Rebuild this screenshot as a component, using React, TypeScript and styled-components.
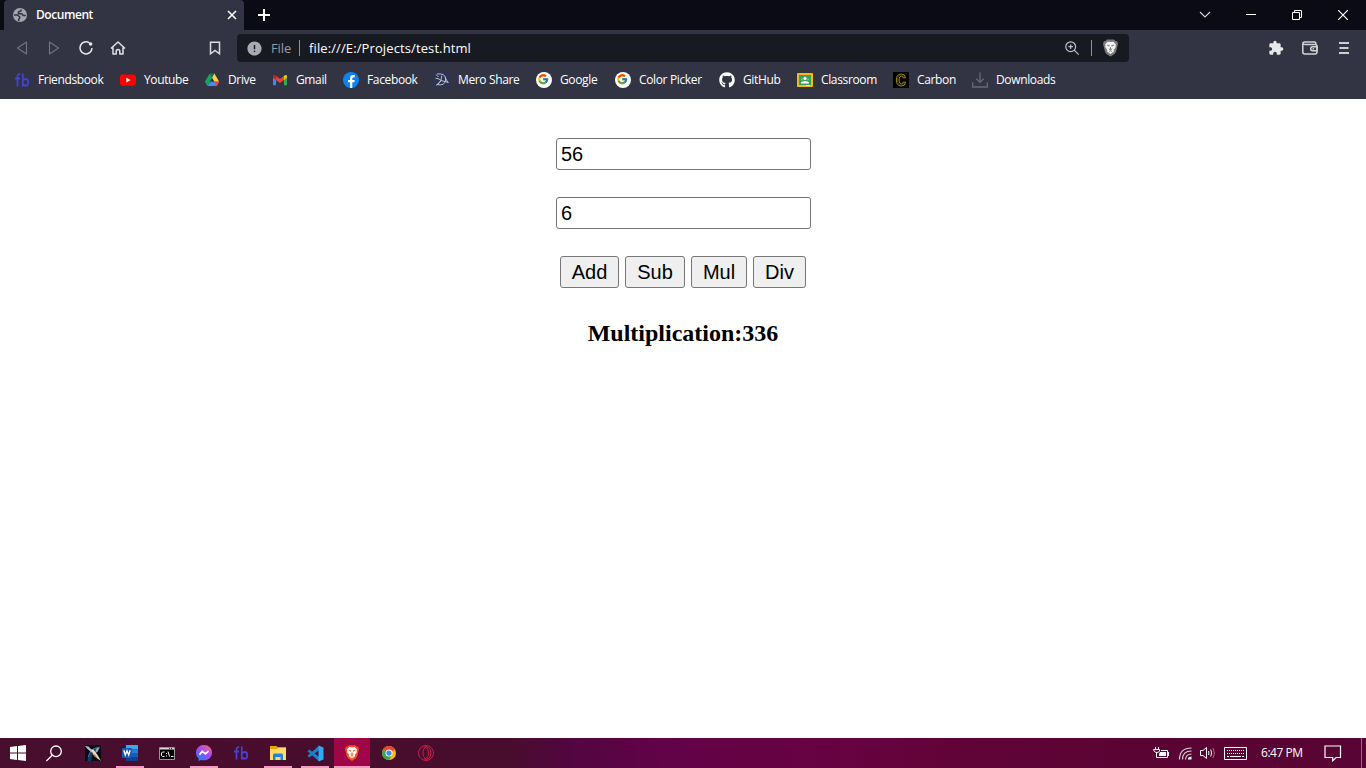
import React from "react";
import styled, { createGlobalStyle } from "styled-components";
import { FcGoogle } from "react-icons/fc";
import { FaGithub } from "react-icons/fa";
import { MdError, MdExtension } from "react-icons/md";

const GlobalStyle = createGlobalStyle`
  html, body { margin: 0; padding: 0; overflow: hidden; background: #fff; }
  * { box-sizing: border-box; }
  svg { display: block; flex: none; }
`;

const UI_FONT = `"Open Sans", "Noto Sans", sans-serif`;

const Screen = styled.div`
  width: 1366px;
  height: 768px;
  display: flex;
  flex-direction: column;
  background: #fff;
`;

const TabStrip = styled.header`
  display: flex;
  height: 30px;
  padding-left: 4px;
  background: #0a0b14;
`;

const Tab = styled.div`
  width: 240px;
  display: flex;
  align-items: center;
  padding: 0 6px 0 8px;
  background: #323443;
  border-radius: 4px 4px 0 0;
`;

const TabTitle = styled.span`
  flex: 1;
  margin-left: 8px;
  font: 600 12px/16px ${UI_FONT};
  letter-spacing: -0.44px;
  color: #fff;
`;

const NewTab = styled.div`
  display: flex;
  align-items: center;
  margin-left: 13px;
  flex: 1;
`;

const WindowButton = styled.div`
  display: flex;
  align-items: center;
  justify-content: center;
  width: 46px;
  height: 29px;
`;

const Toolbar = styled.div`
  display: flex;
  align-items: center;
  height: 36px;
  background: #323443;
`;

const NavGroup = styled.div`
  display: flex;
  align-items: center;
  width: 237px;
  padding-left: 14px;
  gap: 16px;
`;

const BookmarkButton = styled.div`
  margin-left: auto;
  margin-right: 14px;
`;

const AddressBar = styled.div`
  width: 892px;
  height: 28px;
  display: flex;
  align-items: center;
  padding: 0 11px 0 9px;
  border-radius: 4px;
  background: #171a21;
  font: 13px/18px ${UI_FONT};
`;

const Scheme = styled.span`
  margin-left: 8px;
  width: 28px;
  letter-spacing: -0.1px;
  color: #989ba3;
`;

const Divider = styled.span<{ $before?: number; $after: number }>`
  width: 1px;
  height: 16px;
  margin-left: ${(p) => p.$before ?? 0}px;
  margin-right: ${(p) => p.$after}px;
  background: #8f9197;
`;

const Url = styled.span`
  flex: 1;
  letter-spacing: 0.11px;
  color: #fff;
`;

const Actions = styled.div`
  display: flex;
  align-items: center;
  gap: 18px;
  margin-left: auto;
  padding-right: 14px;
`;

const BookmarksBar = styled.nav`
  display: flex;
  align-items: center;
  height: 33px;
  padding: 0 0 5px 14px;
  background: #323443;
`;

const Bookmark = styled.div<{ $w: number }>`
  width: ${(p) => p.$w}px;
  display: flex;
  align-items: center;
  gap: 8px;
  font: 12px/16px ${UI_FONT};
  letter-spacing: -0.36px;
  white-space: nowrap;
  color: #fff;
`;

const Page = styled.main`
  flex: 1;
  display: flex;
  flex-direction: column;
  align-items: center;
  padding-top: 39px;
`;

const NumberInput = styled.input`
  width: 255px;
  height: 32px;
  margin: 0 0 27px 1px;
  padding: 1px 4px;
  border: 1px solid #767676;
  border-radius: 3px;
  outline: none;
  background: #fff;
  color: #000;
  font: 20px "Liberation Sans", Arial, sans-serif;
`;

const Operations = styled.div`
  display: flex;
  gap: 6px;
`;

const Operation = styled.button<{ $w: number }>`
  width: ${(p) => p.$w}px;
  height: 32px;
  padding: 0;
  border: 1px solid #767676;
  border-radius: 3px;
  background: #efefef;
  color: #000;
  font: 20px "Liberation Sans", Arial, sans-serif;
`;

const Result = styled.h4`
  margin: 31px 0 0;
  font: bold 24px/28px "Liberation Serif", "Times New Roman", serif;
  color: #000;
`;

const Taskbar = styled.footer`
  display: flex;
  height: 30px;
  background: linear-gradient(
    90deg,
    #480e2d 0px,
    #480d2d 510px,
    #520640 570px,
    #620247 660px,
    #670242 820px,
    #610337 960px,
    #5a0433 1140px,
    #580434 1366px
  );
`;

const TaskItem = styled.div<{ $running?: boolean; $active?: boolean }>`
  display: flex;
  align-items: center;
  justify-content: center;
  width: ${(p) => (p.$active ? 36 : 28)}px;
  margin: ${(p) => (p.$active ? "0 5px 0 -4px" : "0 9px 0 0")};
  border-top: 2px solid transparent;
  border-bottom: 2px solid ${(p) => (p.$running || p.$active ? "#f69ac1" : "transparent")};
  background: ${(p) => (p.$active ? "#9e0647" : "transparent")};
`;

const StartGroup = styled.div`
  display: flex;
  align-items: center;
  width: 79px;
  padding-left: 10px;
  gap: 20px;
`;

const Tray = styled.div`
  display: flex;
  align-items: center;
  margin-left: auto;
`;

const TrayIcons = styled.div`
  display: flex;
  align-items: center;
  gap: 7px;
`;

const Clock = styled.span`
  width: 44px;
  margin: 0 19px 0 14px;
  font: 12px/16px ${UI_FONT};
  letter-spacing: -0.46px;
  white-space: nowrap;
  color: #fff;
`;

const ShowDesktop = styled.span`
  width: 5px;
  height: 30px;
  margin-left: 19px;
  border-left: 1px solid #a06283;
`;

const Lion = ({ w, h, shield, mane }: { w: number; h: number; shield: string; mane: string }) => (
  <svg width={w} height={h} viewBox="0 0 16 18">
    <path d="M4.3 0h7.4l1.5 1.5L15 1.9l1 2.4-.4 1.8-1.8 7.1-1.5 2.2L8 18l-4.3-2.6-1.5-2.2L.4 6.1 0 4.3l1-2.4 1.8-.4z" fill={shield} />
    <path d="M4.9 2.2 8 2.7l3.1-.5 2.7 3-.5 1.3.3 1.4-2.2 3.2.2 1.5L8 15.3l-3.6-2.7.2-1.5-2.2-3.2.3-1.4-.5-1.3z" fill={mane} />
    <path d="m4.2 5.9 2.5.5-.3 1M11.8 5.9l-2.5.5.3 1M8 8.2v2.6M6.2 9.8 8 11l1.8-1.2M6.6 12.6 8 12l1.4.6" fill="none" stroke={shield} strokeWidth="1" />
  </svg>
);

const FbLogo = () => (
  <svg width="16" height="16" viewBox="0 0 16 16" fill="none" stroke="#4442cf" strokeWidth="1.8">
    <path d="M6.3 2.2H5.5Q3.5 2.2 3.5 4.5V14.5M1 6.5h5M8.8 1.4v13.1M8.8 9q.9-2.2 2.9-2.2 2.5 0 2.5 3.5t-2.5 3.4q-2 0-2.9-2" />
  </svg>
);

const GlobeIcon = () => (
  <svg width="16" height="16" viewBox="0 0 16 16">
    <circle cx="8" cy="8" r="7" fill="#a4a6ad" />
    <path d="M9 2.5v1.3L6.5 5v1.8h3.2l1.5 1.7h2.6M2 8h3.3l2.4 1.8v1.5l-1 1v1.7" fill="none" stroke="#323443" strokeWidth="1.5" />
  </svg>
);

const YoutubeLogo = () => (
  <svg width="16" height="16" viewBox="0 0 16 16">
    <rect y="2.4" width="16" height="11.4" rx="2.8" fill="#f00" />
    <path d="m6.3 5.7 4.3 2.4-4.3 2.4z" fill="#fff" />
  </svg>
);

const DriveLogo = () => (
  <svg width="16" height="16" viewBox="0 0 16 16">
    <path d="M5.7 1.5.8 9.8l2.5 4.3L8.2 5.7z" fill="#14a45c" />
    <path d="M5.7 1.5h4.7L8.2 5.7z" fill="#0b8043" />
    <path d="m10.4 1.5 4.8 8.3h-4.7L8.1 5.7z" fill="#ffcf48" />
    <path d="M5.9 9.8h9.3l-2.4 4.3H3.5z" fill="#4688f4" />
    <path d="m10.5 9.8 2.3 4.3 2.4-4.3z" fill="#ea4335" />
  </svg>
);

const GmailLogo = () => (
  <svg width="16" height="16" viewBox="0 0 16 16">
    <path d="M1 4.2v9h3.1V7.1L1 4.8z" fill="#4285f4" />
    <path d="M15 4.2v9h-3.1V7.1L15 4.8z" fill="#34a853" />
    <path d="M4.1 4v4L8 11l3.9-3V4L8 7z" fill="#ea4335" />
    <path d="M1 4.8V4q.2-1.5 1.8-.9L4.1 4v4L1 5.8z" fill="#c5221f" />
    <path d="M15 4.8V4q-.2-1.5-1.8-.9l-1.3.9v4L15 5.8z" fill="#fbbc04" />
  </svg>
);

const MeroLogo = () => (
  <svg width="16" height="16" viewBox="0 0 16 16">
    <rect width="16" height="16" fill="#2d3354" />
    <path d="M2 2.5 4.5 5M2 13.5l5-4.7M3 2q7.5-1 8.7 4 .5 4.5-2.5 6.2-3 1.3-6.2.3M1.5 6.2 5 7l2 1.5L3.5 13M7 8.5l.8-5M7 8.5l7.5 2M11 5.5l3 5" fill="none" stroke="#c6c9d7" strokeWidth=".9" />
  </svg>
);

const GoogleLogo = () => (
  <svg width="16" height="16" viewBox="0 0 16 16">
    <circle cx="8" cy="8" r="8" fill="#fff" />
    <FcGoogle x="1.2" y="1.2" width="13.6" height="13.6" />
  </svg>
);

const FacebookLogo = () => (
  <svg width="16" height="16" viewBox="0 0 16 16">
    <circle cx="8" cy="8" r="8" fill="#0c83f1" />
    <path d="M9.3 15.9v-5.6h2l.4-2.4H9.3V6.5q0-1.2 1.3-1.2h1.2V3.3q-.8-.2-1.8-.2-2.9 0-2.9 3v1.800H5v2.400h2.100v5.600z" fill="#fff" />
  </svg>
);

const ClassroomLogo = () => (
  <svg width="16" height="16" viewBox="0 0 16 16">
    <rect y="1" width="16" height="14" rx="1" fill="#f5ba14" />
    <rect x="2" y="3" width="12" height="10" fill="#3c9d5d" />
    <circle cx="8" cy="6.4" r="1.6" fill="#fff" />
    <circle cx="5" cy="7.4" r="1" fill="#7ac5a0" />
    <circle cx="11" cy="7.4" r="1" fill="#7ac5a0" />
    <path d="M4 11.5V10.5q1-1.5 4-1.5t4 1.5v1z" fill="#fff" />
    <path d="M9 13h4v1H9z" fill="#fff3cf" />
  </svg>
);

const CarbonLogo = () => (
  <svg width="16" height="16" viewBox="0 0 16 16">
    <rect width="16" height="16" fill="#000" />
    <path d="M12.5 5.8h-2.4Q9.8 4 8.5 4 6 4 6 8t2.5 4q1.3 0 1.6-1.8h2.4Q12 14 8.5 14 3.3 14 3.3 8t5.2-6q3.4 0 4 3.8z" fill="none" stroke="#9d8815" strokeWidth="1" />
    <path d="M11 4.5Q10 3 8.4 3 4.6 3 4.6 8t3.8 5q1.7 0 2.4-1.7" fill="none" stroke="#6a5b0f" strokeWidth=".7" />
  </svg>
);

const DownloadsIcon = () => (
  <svg width="16" height="16" viewBox="0 0 16 16" fill="none" stroke="#666979" strokeWidth="1.3">
    <path d="M8 .5v9.7M4.3 6.8 8 10.4l3.7-3.6M.7 10.3V15h14.6v-4.7" />
  </svg>
);

const bookmarks = [
  { label: "Friendsbook", w: 106, icon: <FbLogo /> },
  { label: "Youtube", w: 84, icon: <YoutubeLogo /> },
  { label: "Drive", w: 68, icon: <DriveLogo /> },
  { label: "Gmail", w: 71, icon: <GmailLogo /> },
  { label: "Facebook", w: 91, icon: <FacebookLogo /> },
  { label: "Mero Share", w: 102, icon: <MeroLogo /> },
  { label: "Google", w: 79, icon: <GoogleLogo /> },
  { label: "Color Picker", w: 104, icon: <GoogleLogo /> },
  { label: "GitHub", w: 78, icon: <FaGithub size={16} color="#fff" /> },
  { label: "Classroom", w: 96, icon: <ClassroomLogo /> },
  { label: "Carbon", w: 79, icon: <CarbonLogo /> },
  { label: "Downloads", w: 90, icon: <DownloadsIcon /> },
];

const tasks = [
  {
    name: "game",
    icon: (
      <svg width="16" height="16" viewBox="0 0 16 16">
        <rect width="16" height="16" fill="#080b16" />
        <path d="M2.5 16Q2.5 4 13 1.5l2 2Q6.5 6 6 16z" fill="#163c68" />
        <path d="M3.5 12Q4.5 4 13 2.5" fill="none" stroke="#3e78a8" strokeWidth="1" />
        <path d="m0 1 3.5.5L8 6 6.5 7.5 2.5 4z" fill="#aebdc6" />
        <path d="m11 4 4-2.5L12.5 7 10 8z" fill="#8fa3ae" />
        <path d="M6 4.500h2.500l4 5.500L16 16 9 11z" fill="#f4d8b4" />
        <path d="m9.500 9 4 5.500L9 10.500z" fill="#d8572e" />
      </svg>
    ),
  },
  {
    name: "word",
    running: true,
    icon: (
      <svg width="16" height="16" viewBox="0 0 16 16">
        <path d="M4 0h11q1 0 1 1v3.500H4z" fill="#41a5ee" />
        <path d="M4 4.500h12V8H4z" fill="#2b7cd3" />
        <path d="M4 8h12v4H4z" fill="#185abd" />
        <path d="M4 12h12v3q0 1-1 1H4z" fill="#103f91" />
        <rect y="3" width="10" height="10" rx=".8" fill="#1958b7" />
        <path d="M1.800 5.300 3.300 10 5 5.800 6.700 10l1.500-4.700" fill="none" stroke="#fff" strokeWidth="1.400" />
      </svg>
    ),
  },
  {
    name: "terminal",
    icon: (
      <svg width="16" height="14" viewBox="0 0 16 14">
        <path d="M.5 1.500h15v12H.5z" fill="#000" stroke="#9d939b" />
        <path d="M1 2h14v1.500H1z" fill="#ddd" />
        <path d="M10 2h1v1h-1zM12 2h1v1h-1z" fill="#333" />
        <path d="M5.500 6H3.500L2.500 7v2.500l1 1h2M7.500 7v1M7.500 9.500v1M9 5.500l1.500 5M12 10.500h2.500" fill="none" stroke="#fff" />
      </svg>
    ),
  },
  {
    name: "messenger",
    running: true,
    icon: (
      <svg width="16" height="16" viewBox="0 0 16 16">
        <defs>
          <linearGradient id="msg" x1=".2" y1="1" x2=".9" y2="0">
            <stop stopColor="#1485ff" />
            <stop offset=".5" stopColor="#a047ff" />
            <stop offset="1" stopColor="#ff6970" />
          </linearGradient>
        </defs>
        <path d="M8 0C3.500 0 0 3.300 0 7.700c0 2.300 1 4.300 2.600 5.700V16l2.500-1.100q1.400.4 2.900.4c4.500 0 8-3.200 8-7.600S12.500 0 8 0z" fill="url(#msg)" />
        <path d="m3.500 9.700 2.700-3.400L9.400 8.900l3.200-3" fill="none" stroke="#fff" strokeWidth="1.800" />
      </svg>
    ),
  },
  { name: "friendsbook", icon: <FbLogo /> },
  {
    name: "files",
    running: true,
    icon: (
      <svg width="16" height="14" viewBox="0 0 16 14">
        <path d="M0 0h6.500l1.500 1.500H16V14H0z" fill="#e7a900" />
        <path d="M0 3h7l1-1.500h8V14H0z" fill="#ffda68" />
        <path d="M3 14V9q0-1.500 1.500-1.500h7Q13 7.500 13 9v5h-2.500v-3h-5v3z" fill="#2385d7" />
      </svg>
    ),
  },
  {
    name: "code",
    running: true,
    icon: (
      <svg width="17" height="17" viewBox="0 0 17 17">
        <path d="m.5 10.700 11.500-10v4.600L2.300 12.500z" fill="#1684cb" />
        <path d="m.5 6.300 1.800-1.800L12 11.700v4.600z" fill="#1684cb" />
        <path d="m11.500.5 5 2v12l-5 2z" fill="#2daaf0" />
      </svg>
    ),
  },
  { name: "browser", active: true, icon: <Lion w={14} h={16} shield="#f4501f" mane="#fff" /> },
  {
    name: "chrome",
    icon: (
      <svg width="14" height="14" viewBox="0 0 16 16">
        <circle cx="8" cy="8" r="8" fill="#fbbc05" />
        <path d="M8 8 1.100 4A8 8 0 0 1 14.930 4z" fill="#ea4335" />
        <path d="M8 8 1.100 4A8 8 0 0 0 8 16l3.500-6z" fill="#34a853" />
        <circle cx="8" cy="8" r="4" fill="#fff" />
        <circle cx="8" cy="8" r="3" fill="#4285f4" />
      </svg>
    ),
  },
  {
    name: "opera",
    icon: (
      <svg width="16" height="16" viewBox="0 0 16 16" fill="none" stroke="#d01a43" strokeWidth="1">
        <circle cx="8" cy="8" r="7.500" />
        <ellipse cx="7.700" cy="8" rx="2.700" ry="5.500" />
        <path d="M6 2.200q2.500-1.400 4.700.4 2.300 2 2.300 5.400t-2.300 5.400Q8.500 15.200 6 13.800" />
      </svg>
    ),
  },
];

export default function App() {
  return (
    <Screen>
      <GlobalStyle />
      <TabStrip>
        <Tab>
          <GlobeIcon />
          <TabTitle>Document</TabTitle>
          <svg width="12" height="12" viewBox="0 0 12 12" stroke="#fff" strokeWidth="1.600">
            <path d="m2 2 8 8M10 2l-8 8" />
          </svg>
        </Tab>
        <NewTab>
          <svg width="14" height="14" viewBox="0 0 14 14" stroke="#fff" strokeWidth="2">
            <path d="M7 1v12M1 7h12" />
          </svg>
        </NewTab>
        <WindowButton>
          <svg width="12" height="8" viewBox="0 0 12 8" fill="none" stroke="#d7d7dc" strokeWidth="1.100">
            <path d="m1 1 5 5 5-5" />
          </svg>
        </WindowButton>
        <WindowButton>
          <svg width="10" height="1" viewBox="0 0 10 1"><path d="M0 0h10v1H0z" fill="#fff" /></svg>
        </WindowButton>
        <WindowButton>
          <svg width="10" height="10" viewBox="0 0 10 10" fill="none" stroke="#fff">
            <path d="M.5 2.500h7v7h-7zM2.500 2V.5h7v7H8" />
          </svg>
        </WindowButton>
        <WindowButton>
          <svg width="10" height="10" viewBox="0 0 10 10" stroke="#fff" strokeWidth="1.200"><path d="m0 0 10 10M10 0 0 10" /></svg>
        </WindowButton>
      </TabStrip>
      <Toolbar>
        <NavGroup>
          <svg width="16" height="16" viewBox="0 0 16 16" fill="none" stroke="#70727e" strokeWidth="1.200" strokeLinejoin="round"><path d="M12.500 2v12L3.500 8z" /></svg>
          <svg width="16" height="16" viewBox="0 0 16 16" fill="none" stroke="#70727e" strokeWidth="1.200" strokeLinejoin="round"><path d="M3.500 2v12l9-6z" /></svg>
          <svg width="16" height="16" viewBox="0 0 16 16" fill="none" stroke="#e8e8ea" strokeWidth="1.500">
            <path d="M11.500 3A6 6 0 1 0 14 8" />
            <circle cx="12.600" cy="4" r="1.800" fill="#e8e8ea" stroke="none" />
          </svg>
          <svg width="16" height="16" viewBox="0 0 16 16" fill="none" stroke="#e2e2e5" strokeWidth="1.500" strokeLinejoin="round">
            <path d="M1 8.500 8 2l7 6.500M3 7.500V14h3.200v-3.300q0-1.200 1.800-1.200t1.800 1.200V14H13V7.500" />
          </svg>
          <BookmarkButton>
            <svg width="16" height="16" viewBox="0 0 16 16" fill="none" stroke="#dcdce0" strokeWidth="1.500"><path d="M3.500 2.200h9v11.600L8 10.500l-4.500 3.300z" /></svg>
          </BookmarkButton>
        </NavGroup>
        <AddressBar>
          <MdError size={17} color="#a9abb1" />
          <Scheme>File</Scheme>
          <Divider $after={9} />
          <Url>file:///E:/Projects/test.html</Url>
          <svg width="16" height="16" viewBox="0 0 16 16" fill="none" stroke="#bfc1c7" strokeWidth="1.200">
            <circle cx="6.700" cy="6.700" r="4.900" /><path d="m10.200 10.200 4.500 4.500M4.400 6.700H9M6.700 4.400V9" />
          </svg>
          <Divider $before={11} $after={11} />
          <Lion w={15} h={18} shield="#7b7b7d" mane="#f2f2f2" />
        </AddressBar>
        <Actions>
          <MdExtension size={16} color="#e8e8ea" />
          <svg width="16" height="16" viewBox="0 0 16 16" fill="none" stroke="#d3d4d9" strokeWidth="1.500">
            <path d="M13.800 4.500V3.200Q13.800 2 12.500 2H2.700Q.8 2 .8 3.800V12q0 2 2 2H13q2 0 2-2V6.500q0-2-2-2H3.500Q.8 4.500.8 3.200" />
            <path d="M15 6.800h-4.300q-2 0-2 2t2 2H15z" /><path d="M10.600 8.800h1.500" />
          </svg>
          <svg width="16" height="16" viewBox="0 0 16 16" fill="#cfd0d5"><path d="M3 2h10v2H3zM3.500 7h9v2h-9zM3 12h10v2H3z" /></svg>
        </Actions>
      </Toolbar>
      <BookmarksBar>
        {bookmarks.map((b) => (
          <Bookmark key={b.label} $w={b.w}>{b.icon}{b.label}</Bookmark>
        ))}
      </BookmarksBar>
      <Page>
        <NumberInput defaultValue="56" />
        <NumberInput defaultValue="6" />
        <Operations>
          <Operation $w={59}>Add</Operation>
          <Operation $w={60}>Sub</Operation>
          <Operation $w={56}>Mul</Operation>
          <Operation $w={53}>Div</Operation>
        </Operations>
        <Result>Multiplication:336</Result>
      </Page>
      <Taskbar>
        <StartGroup>
          <svg width="16" height="16" viewBox="0 0 16 16" fill="#fff"><path d="m0 2 7-1v6.500H0zM8 .9 16 0v7.500H8zM0 8.500h7V15l-7-1zM8 8.500h8V16l-8-1z" /></svg>
          <svg width="17" height="17" viewBox="0 0 17 17" fill="none" stroke="#fff" strokeWidth="1.300"><circle cx="10" cy="6.300" r="5.300" /><path d="M6.200 10.200.3 16.100" /></svg>
        </StartGroup>
        {tasks.map((t) => (
          <TaskItem key={t.name} $running={t.running} $active={t.active}>{t.icon}</TaskItem>
        ))}
        <Tray>
          <TrayIcons>
            <svg width="18" height="12" viewBox="0 0 18 12" fill="none" stroke="#fff">
              <path d="M2.500 0v2M5.500 0v2M.5 2.500h6v1.500q-.5 1.500-2.500 1.500T1 4zM3.500 5.500v5h11v-7H8M15.500 5v4" /><path d="M7 5h6v4H6V7z" fill="#fff" stroke="none" />
            </svg>
            <svg width="15" height="14" viewBox="0 0 14 14" fill="none" stroke="#ddd3d9" strokeWidth="1.100">
              <path d="M1 13.500Q1 2 13 2M4 13.500Q4 5 13 5M7 13.500Q7.500 8 13 8" /><path d="M9.500 13.500V12q1-1.500 3.500-1.500v3z" fill="#fff" stroke="none" />
            </svg>
            <svg width="17" height="14" viewBox="0 0 17 14" fill="none" stroke="#fff">
              <path d="M.5 4.500H3L6.500 1.500v11L3 9.500H.5z" /><path d="M8.500 5q1 2 0 4M10.700 3.500q2 3.500 0 7" /><path d="M13 2q3 5 0 10" stroke="#a36a85" />
            </svg>
            <svg width="23" height="13" viewBox="0 0 23 13" fill="none" stroke="#fff">
              <path d="M.5.5h22v12H.5z" /><path d="M3 3.500h17M3 6.500h17" strokeDasharray="1 1" /><path d="M3 9.500h2M6 9.500h11M18 9.500h2" />
            </svg>
          </TrayIcons>
          <Clock>6:47 PM</Clock>
          <svg width="18" height="17" viewBox="0 0 18 17" fill="none" stroke="#fff" strokeWidth="1.200"><path d="M1 1h15.500v11.500H12L8.700 15.800V12.500H1z" /></svg>
          <ShowDesktop />
        </Tray>
      </Taskbar>
    </Screen>
  );
}
